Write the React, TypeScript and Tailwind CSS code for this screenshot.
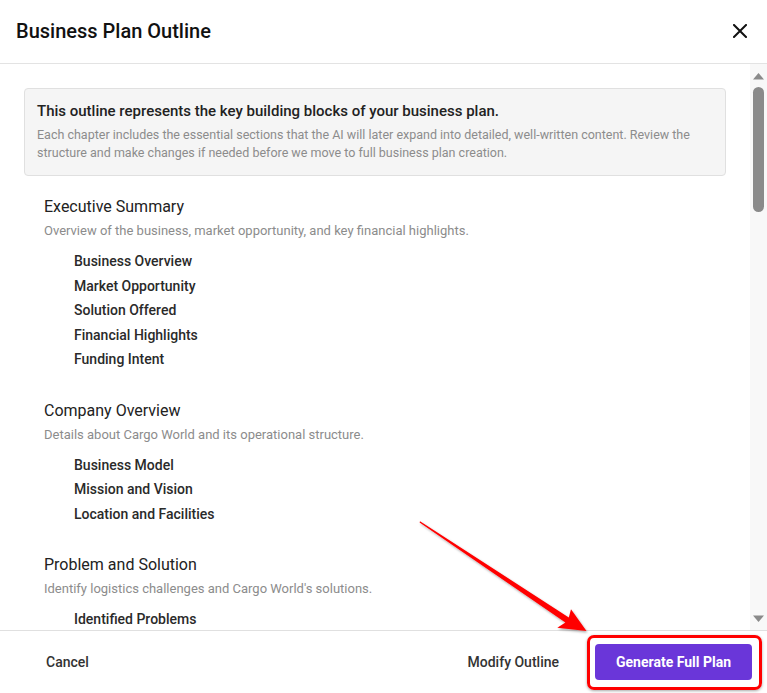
import React from 'react';

const chapters = [
  {
    title: 'Executive Summary',
    description: 'Overview of the business, market opportunity, and key financial highlights.',
    sections: ['Business Overview', 'Market Opportunity', 'Solution Offered', 'Financial Highlights', 'Funding Intent'],
  },
  {
    title: 'Company Overview',
    description: 'Details about Cargo World and its operational structure.',
    sections: ['Business Model', 'Mission and Vision', 'Location and Facilities'],
  },
  {
    title: 'Problem and Solution',
    description: "Identify logistics challenges and Cargo World's solutions.",
    sections: ['Identified Problems'],
  },
];

function Scrollbar() {
  return (
    <div className="flex w-[17px] shrink-0 flex-col items-center bg-[#f8f8f8]">
      <svg width="11" height="7" viewBox="0 0 11 7" className="mt-[9px]">
        <path d="M5.5 0 L11 6.5 L0 6.5 Z" fill="#8a8a8a" />
      </svg>
      <div className="mt-[7px] h-[125px] w-[11px] rounded-full bg-[#8a8a8a]" />
      <div className="flex-1" />
      <svg width="11" height="7" viewBox="0 0 11 7" className="mb-[8px]">
        <path d="M0 0.5 L11 0.5 L5.5 7 Z" fill="#8a8a8a" />
      </svg>
    </div>
  );
}

export default function App() {
  return (
    <div
      className="relative flex h-[693px] w-[767px] flex-col overflow-hidden bg-white text-[#222]"
      style={{ fontFamily: 'Roboto, "Liberation Sans", sans-serif' }}
    >
      {/* header */}
      <div className="flex h-[64px] shrink-0 items-center justify-between border-b border-[#e3e3e3] pb-[2px] pl-4 pr-5">
        <h1 className="text-[20px] font-medium text-[#111]">Business Plan Outline</h1>
        <button className="flex h-[14px] w-[14px] items-center justify-center">
          <svg width="14" height="14" viewBox="0 0 14 14">
            <path d="M1 1 L13 13 M13 1 L1 13" stroke="#111" strokeWidth="2" strokeLinecap="square" />
          </svg>
        </button>
      </div>

      {/* body */}
      <div className="flex h-[566px] shrink-0">
        <div className="flex-1 overflow-hidden px-6 pt-6">
          <div className="rounded border border-[#e0e0e0] bg-[#f5f5f5] px-3 pb-[13px] pt-3">
            <p className="text-[15px] font-medium leading-5 text-[#222]">
              This outline represents the key building blocks of your business plan.
            </p>
            <p className="mt-[5px] text-[12.5px] leading-[18px] text-[#8c8c8c]">
              Each chapter includes the essential sections that the AI will later expand into detailed, well-written content. Review the structure and make changes if needed before we move to full business plan creation.
            </p>
          </div>

          <div className="mt-[19px] flex flex-col gap-[27px] px-5">
            {chapters.map((c) => (
              <div key={c.title}>
                <h2 className="text-[16px] leading-6 text-[#222]">{c.title}</h2>
                <p className="mt-[3px] text-[13px] leading-[18px] text-[#8c8c8c]">{c.description}</p>
                <ul className="mt-[9px] pl-[30px]">
                  {c.sections.map((s) => (
                    <li key={s} className="text-[14px] font-medium leading-[24.5px] text-[#2a2a2a]">
                      {s}
                    </li>
                  ))}
                </ul>
              </div>
            ))}
          </div>
        </div>
        <Scrollbar />
      </div>

      {/* footer */}
      <div className="flex h-[63px] shrink-0 items-center justify-between border-t border-[#e0e0e0] pl-[26px] pr-[15px]">
        <button className="px-5 py-2 text-[14px] font-medium text-[#333]">Cancel</button>
        <div className="flex items-center gap-4">
          <button className="px-5 py-2 text-[14px] font-medium text-[#333]">Modify Outline</button>
          <button className="h-[36px] w-[157px] rounded bg-[#6a36d9] text-[14px] font-bold text-white">
            Generate Full Plan
          </button>
        </div>
      </div>

      {/* annotation: red box + arrow */}
      <div className="pointer-events-none absolute left-[587px] top-[635px] h-[55px] w-[175px] rounded-[7px] border-[3px] border-[#f00] shadow-[0_1px_3px_rgba(0,0,0,0.35)]" />
      <svg className="pointer-events-none absolute left-0 top-0" width="767" height="693">
        <defs>
          <filter id="sh" x="-10%" y="-10%" width="130%" height="130%">
            <feDropShadow dx="1" dy="1.5" stdDeviation="1.2" floodColor="#000" floodOpacity="0.35" />
          </filter>
        </defs>
        <polygon
          points="420,521.2 568.8,617.4 571,609.3 586.5,631 557.3,627.7 565.4,622.6 419.6,522.6"
          fill="#f00"
          filter="url(#sh)"
        />
      </svg>
    </div>
  );
}
